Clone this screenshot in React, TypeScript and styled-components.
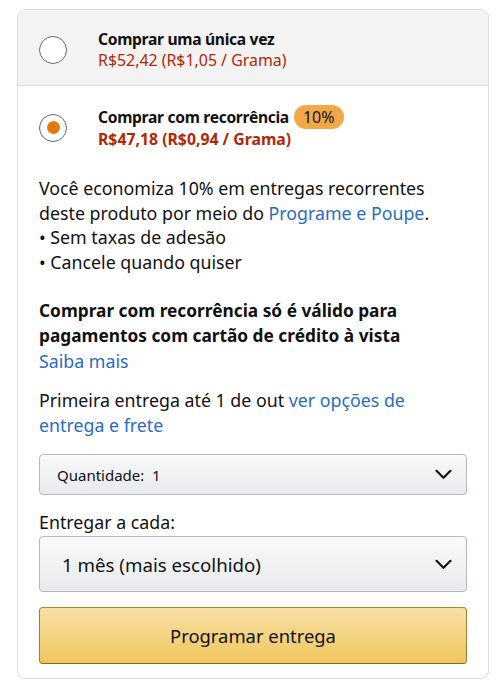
import React from "react";
import styled, { createGlobalStyle } from "styled-components";

const Global = createGlobalStyle`
  html, body { margin: 0; padding: 0; background: #ffffff; }
  body { font-family: "Noto Sans", "Open Sans", Arial, sans-serif; color: #111111; }
`;

const Card = styled.div`
  margin: 9px 0 0 17px;
  width: 472px;
  box-sizing: border-box;
  border: 1px solid #dddddd;
  border-radius: 8px;
  overflow: hidden;
  background: #ffffff;
`;

const OptionRow = styled.div<{ $grey?: boolean }>`
  display: flex;
  align-items: center;
  background: ${(p) => (p.$grey ? "#f3f3f3" : "#ffffff")};
  border-bottom: ${(p) => (p.$grey ? "1px solid #dddddd" : "none")};
  padding: ${(p) => (p.$grey ? "19px 0 14px" : "19px 0 0")};
`;

const RadioWrap = styled.div`
  width: 80px;
  display: flex;
  justify-content: flex-start;
  padding-left: 21px;
  box-sizing: border-box;
`;

const Radio = styled.span<{ $checked?: boolean }>`
  width: 28px;
  height: 28px;
  box-sizing: border-box;
  border-radius: 50%;
  border: 1.5px solid #6b6b6b;
  background: #ffffff;
  display: flex;
  align-items: center;
  justify-content: center;
  &::after {
    content: "";
    display: ${(p) => (p.$checked ? "block" : "none")};
    width: 13px;
    height: 13px;
    border-radius: 50%;
    background: #e47911;
  }
`;

const OptionText = styled.div`
  display: flex;
  flex-direction: column;
`;

const OptionTitle = styled.div`
  font-size: 15.6px;
  font-weight: 700;
  letter-spacing: -0.3px;
  line-height: 21px;
  display: flex;
  align-items: center;
  gap: 5px;
`;

const Badge = styled.span`
  display: inline-block;
  background: #f3a847;
  color: #111111;
  font-weight: 400;
  font-size: 16px;
  letter-spacing: 0;
  line-height: 24px;
  height: 24px;
  padding: 0 9px;
  border-radius: 12px;
`;

const Price = styled.div<{ $bold?: boolean }>`
  font-size: ${(p) => (p.$bold ? "15.8px" : "15.9px")};
  line-height: 21px;
  color: #b12704;
  font-weight: ${(p) => (p.$bold ? 700 : 400)};
`;

const Body = styled.div`
  padding: 26px 21px 14px;
  display: flex;
  flex-direction: column;
`;

const Para = styled.p<{ $bold?: boolean; $gap?: number }>`
  margin: ${(p) => p.$gap ?? 0}px 0 0;
  font-size: ${(p) => (p.$bold ? "17.3px" : "17.8px")};
  line-height: 24.6px;
  font-weight: ${(p) => (p.$bold ? 700 : 400)};
`;

const Link = styled.span`
  color: #2a6bc4;
  font-weight: 400;
  font-size: 17.8px;
`;

const SelectBox = styled.div<{ $big?: boolean; $gap?: number }>`
  margin-top: ${(p) => p.$gap ?? 0}px;
  height: ${(p) => (p.$big ? 56 : 41)}px;
  box-sizing: border-box;
  border: 1px solid #b5b8bd;
  border-radius: 4px;
  background: linear-gradient(#f8f9fa, #e8eaed);
  box-shadow: 0 1px 0 rgba(255, 255, 255, 0.6) inset;
  display: flex;
  align-items: center;
  justify-content: space-between;
  padding: ${(p) => (p.$big ? "0 14px 0 22px" : "0 14px 0 17px")};
  font-size: ${(p) => (p.$big ? "18.7px" : "15px")};
  color: #111111;
`;

const Label = styled.div`
  margin-top: 15px;
  font-size: 17.8px;
  line-height: 24px;
  margin-bottom: 2px;
`;

const Button = styled.div`
  margin-top: 15px;
  height: 57px;
  box-sizing: border-box;
  border: 1px solid;
  border-color: #a88734 #9c7e31 #846a29;
  border-radius: 4px;
  background: linear-gradient(#f7dfa5, #f0c75e);
  display: flex;
  align-items: center;
  justify-content: center;
  font-size: 18.4px;
  color: #111111;
`;

const Chevron = () => (
  <svg width="17" height="11" viewBox="0 0 17 11" fill="none">
    <path d="M1.5 1.8 L8.5 8.8 L15.5 1.8" stroke="#111" strokeWidth="2.2" strokeLinecap="round" strokeLinejoin="round" />
  </svg>
);

export default function App() {
  return (
    <>
      <Global />
      <Card>
        <OptionRow $grey>
          <RadioWrap>
            <Radio />
          </RadioWrap>
          <OptionText>
            <OptionTitle>Comprar uma única vez</OptionTitle>
            <Price>R$52,42 (R$1,05 / Grama)</Price>
          </OptionText>
        </OptionRow>
        <OptionRow>
          <RadioWrap>
            <Radio $checked />
          </RadioWrap>
          <OptionText>
            <OptionTitle>
              Comprar com recorrência <Badge>10%</Badge>
            </OptionTitle>
            <Price $bold>R$47,18 (R$0,94 / Grama)</Price>
          </OptionText>
        </OptionRow>
        <Body>
          <Para>
            Você economiza 10% em entregas recorrentes deste produto por meio do{" "}
            <Link>Programe e Poupe</Link>.
            <br />• Sem taxas de adesão
            <br />• Cancele quando quiser
          </Para>
          <Para $bold $gap={25}>
            Comprar com recorrência só é válido para pagamentos com cartão de crédito à vista
            <br />
            <Link>Saiba mais</Link>
          </Para>
          <Para $gap={14}>
            Primeira entrega até 1 de out <Link>ver opções de entrega e frete</Link>
          </Para>
          <SelectBox $gap={17}>
            <span>Quantidade:&nbsp; 1</span>
            <Chevron />
          </SelectBox>
          <Label>Entregar a cada:</Label>
          <SelectBox $big>
            <span>1 mês (mais escolhido)</span>
            <Chevron />
          </SelectBox>
          <Button>Programar entrega</Button>
        </Body>
      </Card>
    </>
  );
}
